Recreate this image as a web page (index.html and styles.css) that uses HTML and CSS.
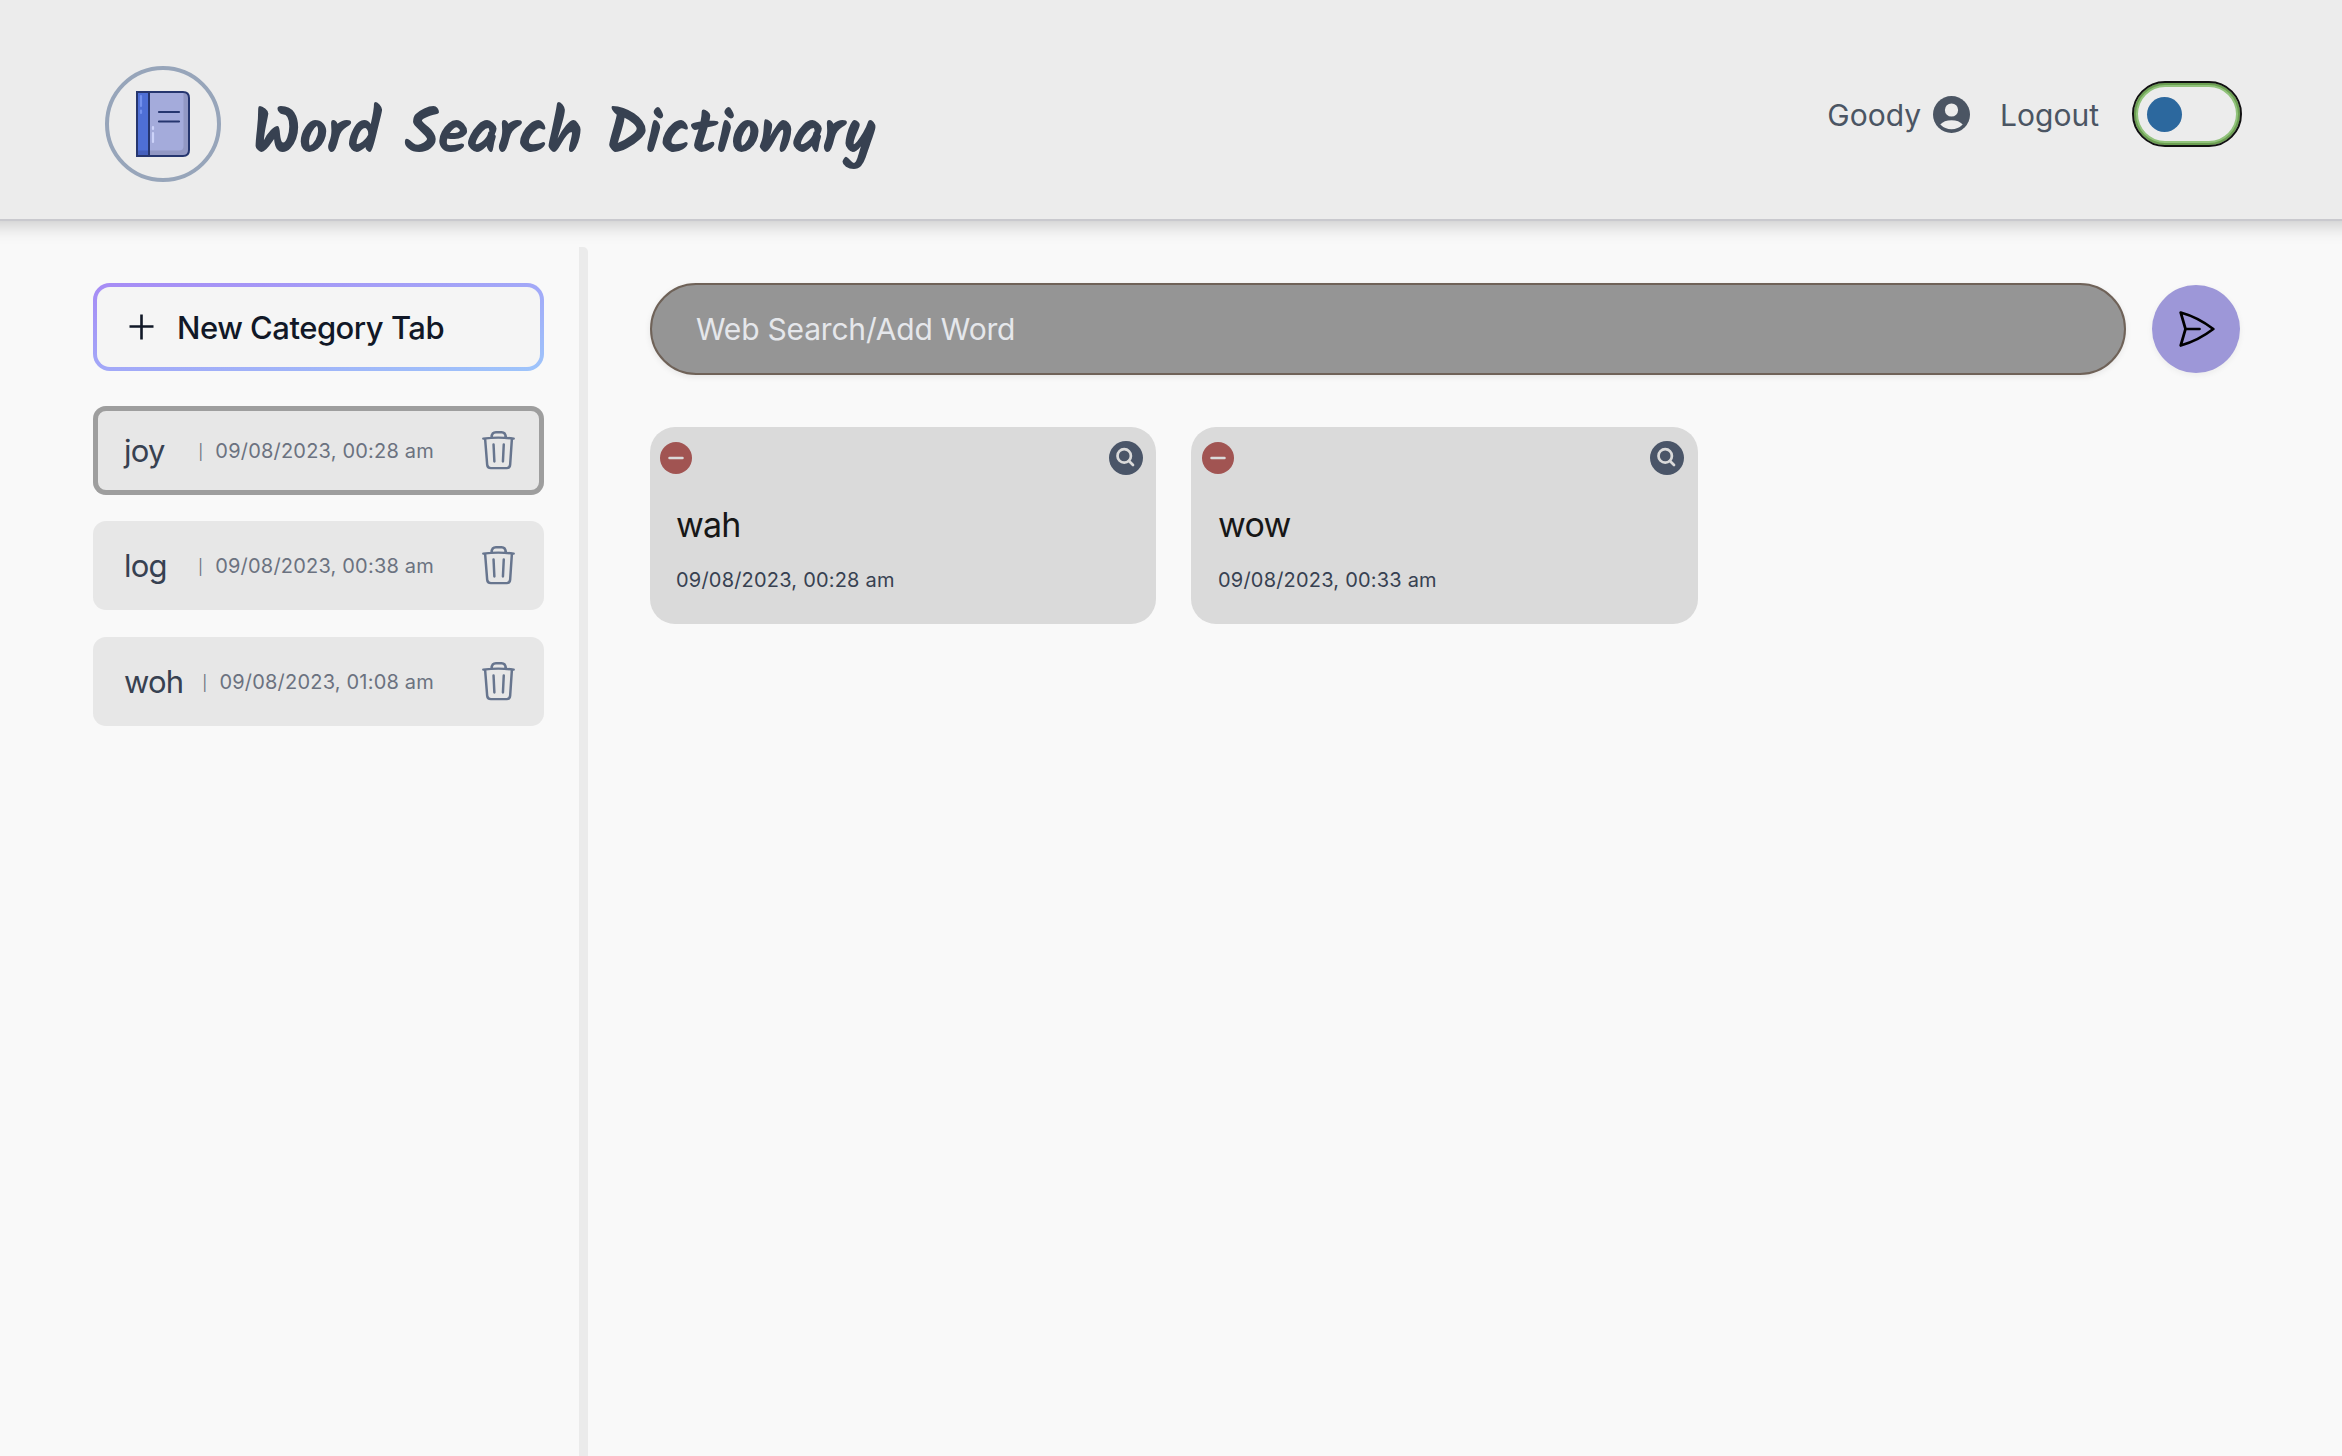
FILE: index.html
```html
<!DOCTYPE html>
<html lang="en">
<head>
<meta charset="utf-8">
<title>Word Search Dictionary</title>
<link rel="stylesheet" href="styles.css">
</head>
<body>
<svg class="defs" aria-hidden="true">
  <symbol id="trash" viewBox="0 0 32 40" preserveAspectRatio="none">
    <g fill="none" stroke="currentColor" stroke-width="2.4" stroke-linecap="round" stroke-linejoin="round">
      <path d="M1.3 8.6Q16 6.6 30.700 8.600M3 8.600L5 34.600Q5.300 38.100 8.600 38.100H24Q27 38.100 27.300 34.600L29 8.600M9.200 7.500C9.400 4 10.800 2.200 13.500 2.200H19C21.700 2.200 22.900 4 23.100 7.500M11.200 14.500L12 31.500M21.100 14.500L20.300 31.500"/>
    </g>
  </symbol>
  <symbol id="minus" viewBox="0 0 32 32">
    <circle cx="16" cy="16" r="16" fill="#a15452"/>
    <path d="M9.500 16H22.500" stroke="#dadada" stroke-width="2.500" stroke-linecap="round"/>
  </symbol>
  <symbol id="lookup" viewBox="0 0 34 34">
    <circle cx="17" cy="17" r="17" fill="#4a5568"/>
    <g fill="none" stroke="#dadada" stroke-width="2.700" stroke-linecap="round">
      <circle cx="15.200" cy="14.900" r="6.700"/>
      <path d="M20 20L24 24"/>
    </g>
  </symbol>
</svg>

<header class="header">
  <div class="brand">
    <div class="logo">
      <svg width="54" height="66" viewBox="0 0 54 66">
        <path d="M1 1H47Q53 1 53 7V59Q53 65 47 65H1Z" fill="#a4abdb"/>
        <path d="M47 1Q53 1 53 7V59Q53 65 47 65H13V59.500H43Q47.500 59.500 47.500 55V1Z" fill="#9298c4"/>
        <path d="M1 1H13V65H1Z" fill="#4e6fd6"/>
        <path d="M1 59.500H13V65H1Z" fill="#4560bd"/>
        <path d="M13 1V65M1 1H47Q53 1 53 7V59Q53 65 47 65H1Z" fill="none" stroke="#26366f" stroke-width="2"/>
        <path d="M23 21H43M23 30.500H43" stroke="#26366f" stroke-width="2.200" stroke-linecap="round"/>
        <path d="M5 5V15M5 19.500V22" stroke="#7391ee" stroke-width="2.200" stroke-linecap="round"/>
        <path d="M17 36V38M17 42V51" stroke="#cdd3fa" stroke-width="2.200" stroke-linecap="round"/>
      </svg>
    </div>
    <h1 class="title">Word Search Dictionary</h1>
  </div>
  <nav class="nav">
    <span class="user">Goody</span>
    <svg class="avatar" width="37" height="37" viewBox="0 0 37 37">
      <circle cx="18.500" cy="18.500" r="18.500" fill="#4b5563"/>
      <circle cx="18.500" cy="14" r="6.600" fill="#ececec"/>
      <path d="M7.300 28.500Q11 24.200 18.500 24.200T29.700 28.500Q25 33.300 18.500 33.300T7.300 28.500Z" fill="#ececec"/>
    </svg>
    <span class="logout">Logout</span>
    <div class="toggle"><span class="knob"></span></div>
  </nav>
</header>

<div class="body">
  <aside class="sidebar">
    <button class="new-tab">
      <svg width="25" height="26" viewBox="0 0 25 26"><path d="M.5 12.500H24.500M12.500 .5V25.500" stroke="#111827" stroke-width="2.600"/></svg>
      <span>New Category Tab</span>
    </button>
    <ul class="tabs">
      <li class="tab active"><span class="name">joy</span><span class="date"><i>|</i>09/08/2023, 00:28 am</span><svg class="trash"><use href="#trash"/></svg></li>
      <li class="tab"><span class="name">log</span><span class="date"><i>|</i>09/08/2023, 00:38 am</span><svg class="trash"><use href="#trash"/></svg></li>
      <li class="tab"><span class="name">woh</span><span class="date"><i>|</i>09/08/2023, 01:08 am</span><svg class="trash"><use href="#trash"/></svg></li>
    </ul>
  </aside>
  <main class="main">
    <div class="search">
      <div class="field">Web Search/Add Word</div>
      <button class="send">
        <svg width="36" height="36" viewBox="0 0 36 36" fill="none" stroke="#000" stroke-width="2.700" stroke-linecap="round" stroke-linejoin="round"><path d="M1.700 1.500Q19 6.300 34.300 18Q19 29.700 1.700 34.500L6.500 18ZM6.500 18H20.500"/></svg>
      </button>
    </div>
    <div class="cards">
      <article class="card">
        <div class="actions"><svg class="minus"><use href="#minus"/></svg><svg class="lookup"><use href="#lookup"/></svg></div>
        <h2 class="word">wah</h2>
        <p class="time">09/08/2023, 00:28 am</p>
      </article>
      <article class="card">
        <div class="actions"><svg class="minus"><use href="#minus"/></svg><svg class="lookup"><use href="#lookup"/></svg></div>
        <h2 class="word">wow</h2>
        <p class="time">09/08/2023, 00:33 am</p>
      </article>
    </div>
  </main>
</div>
</body>
</html>
```
FILE: styles.css
```css
* { box-sizing: border-box; margin: 0; padding: 0; }

body {
  display: flex;
  flex-direction: column;
  height: 1456px;
  overflow: hidden;
  background: #f9f9f9;
  font-family: Inter, "Liberation Sans", sans-serif;
}

.defs { display: none; }
svg { display: block; flex: none; }
button { border: none; font: inherit; }

.header {
  display: flex;
  justify-content: space-between;
  flex: none;
  height: 221px;
  padding: 66px 100px 0 105px;
  background: #ececec;
  border-bottom: 2px solid #c9c9ce;
  box-shadow: 0 -16px 18px 20px rgba(0, 0, 0, 0.2);
}

.brand { display: flex; height: 116px; }

.logo {
  display: flex;
  align-items: center;
  justify-content: center;
  width: 116px;
  height: 116px;
  border: 4px solid #97a5ba;
  border-radius: 50%;
}

.title {
  margin: 34px 0 0 31px;
  color: #374151;
  font: 700 62px/74px Kalam, Lato, sans-serif;
  letter-spacing: -1.2px;
  word-spacing: 2px;
  white-space: nowrap;
}

.nav {
  display: flex;
  align-items: center;
  height: 66px;
  margin-top: 15px;
  color: #4b5563;
  font-size: 30px;
  line-height: 36px;
}

.user, .logout { padding-top: 2px; }

.avatar { margin: 0 30px 0 12px; }

.toggle {
  display: flex;
  align-items: center;
  width: 110px;
  height: 66px;
  margin-left: 33px;
  padding-left: 13px;
  border: 2px solid #111;
  border-radius: 33px;
  box-shadow: inset 0 0 0 2px #6c9f52, inset 0 0 0 4px #92c37c;
}

.knob {
  width: 35px;
  height: 35px;
  border-radius: 50%;
  background: #2c689e;
}

.body { display: flex; flex: 1; padding-top: 26px; }

.sidebar {
  width: 588px;
  padding: 36px 35px 0 93px;
  border-right: 9px solid #ebebeb;
  border-top-right-radius: 5px;
}

.new-tab {
  display: flex;
  align-items: center;
  width: 451px;
  height: 88px;
  padding: 0 32px;
  gap: 23px;
  border: 4px solid transparent;
  border-radius: 17px;
  background: linear-gradient(#f5f5f5, #f5f5f5) padding-box,
    linear-gradient(to bottom right, #a78bf5, #9ec5fb) border-box;
  color: #111827;
  font-size: 31px;
  font-weight: 500;
  letter-spacing: -0.5px;
}

.tabs {
  display: flex;
  flex-direction: column;
  gap: 26px;
  margin-top: 35px;
  list-style: none;
}

.tab {
  display: flex;
  align-items: center;
  width: 451px;
  height: 89px;
  padding: 0 29px 0 31px;
  border-radius: 13px;
  background: #e7e7e7;
}

.tab:last-child { margin-top: 1px; }

.active { box-shadow: inset 0 0 0 5px #9e9e9e; }

.name {
  flex: 1;
  color: #374151;
  font-size: 31px;
  letter-spacing: -0.8px;
}

.date {
  color: #6b7280;
  font-size: 20px;
  letter-spacing: 0.2px;
}

.date i {
  margin-right: 12px;
  font-size: 15px;
  font-style: normal;
  vertical-align: 1px;
}

.trash { width: 33px; height: 40px; margin: -1px 0 0 48px; color: #67758e; }

.main { flex: 1; padding: 36px 102px 0 62px; }

.search {
  display: flex;
  align-items: center;
  gap: 26px;
}

.field {
  flex: 1;
  height: 92px;
  padding-left: 44px;
  border: 2px solid #6f6258;
  border-radius: 46px;
  background: #959595;
  box-shadow: 0 2px 6px rgba(0, 0, 0, 0.08);
  color: #e5e7eb;
  font-size: 30px;
  line-height: 88px;
  letter-spacing: -0.2px;
}

.send {
  display: flex;
  align-items: center;
  justify-content: center;
  width: 88px;
  height: 88px;
  border-radius: 50%;
  background: #9d97d8;
  box-shadow: 0 2px 6px rgba(0, 0, 0, 0.06);
}

.send svg { margin-left: 1px; }

.cards { display: flex; gap: 35px; margin-top: 52px; }

.card {
  width: 506px;
  height: 197px;
  padding: 14px 13px 0 26px;
  border-radius: 25px;
  background: #dadada;
}

.card:last-child { width: 507px; padding: 14px 14px 0 27px; }

.actions {
  display: flex;
  align-items: center;
  justify-content: space-between;
  height: 34px;
  margin-left: -16px;
}

.minus { width: 32px; height: 32px; }
.lookup { width: 34px; height: 34px; }

.word {
  margin-top: 29px;
  color: #171717;
  font-size: 34px;
  font-weight: 400;
  line-height: 42px;
  letter-spacing: -0.8px;
}

.time {
  margin-top: 22px;
  color: #374151;
  font-size: 20px;
  line-height: 24px;
  letter-spacing: 0.2px;
}
```
